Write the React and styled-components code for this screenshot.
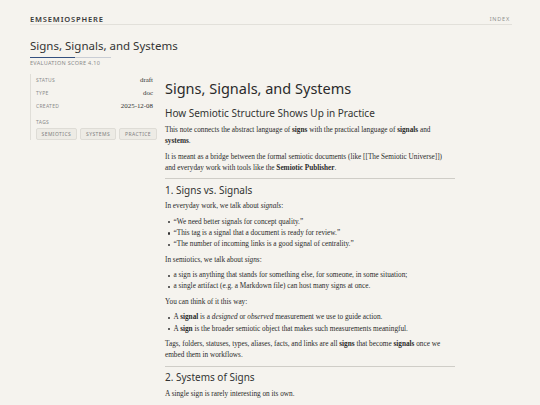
import React from "react";
import styled, { createGlobalStyle } from "styled-components";

const Global = createGlobalStyle`
  html, body { margin: 0; padding: 0; background: #f5f3ee; }
  body { font-family: "Liberation Serif", serif; color: #2b2b2b; }
  * { box-sizing: border-box; }
`;

const Page = styled.div`
  width: 540px;
  min-height: 405px;
  padding: 0 28px 0 30px;
  background: #f5f3ee;
  overflow: hidden;
`;

const TopBar = styled.header`
  display: flex;
  justify-content: space-between;
  align-items: center;
  padding-top: 14px;
  height: 25px;
  border-bottom: 1px solid #e2e0da;
`;

const Brand = styled.div`
  font-family: "Noto Sans", sans-serif;
  font-size: 7.5px;
  font-weight: 600;
  letter-spacing: 0.85px;
  color: #3a3a3a;
  line-height: 10px;
`;

const NavLink = styled.div`
  font-family: "Noto Sans", sans-serif;
  font-size: 5.5px;
  letter-spacing: 0.8px;
  color: #8f8f8f;
  margin-right: 2px;
  line-height: 10px;
`;

const DocHead = styled.div`
  padding-top: 12.5px;
`;

const DocTitle = styled.div`
  font-family: "Noto Sans", sans-serif;
  font-size: 11.5px;
  line-height: 15px;
  color: #333;
  white-space: nowrap;
`;

const ScoreBar = styled.div`
  width: 81px;
  height: 1.5px;
  margin-top: 4px;
  background: #c9cdd4;
`;

const ScoreFill = styled.div`
  height: 100%;
  background: #34507f;
`;

const ScoreLabel = styled.div`
  margin-top: 2.2px;
  font-family: "Noto Sans", sans-serif;
  font-size: 5.5px;
  line-height: 7px;
  letter-spacing: 0.3px;
  color: #8a8a8a;
`;

const Layout = styled.div`
  display: grid;
  grid-template-columns: 123px 290px;
  column-gap: 12px;
  margin-top: 7.3px;
  align-items: start;
`;

const Meta = styled.aside`
  border-left: 1px solid #e0ded8;
  padding: 2px 0 0 5px;
  display: flex;
  flex-direction: column;
  gap: 5px;
`;

const MetaRow = styled.div`
  display: flex;
  justify-content: space-between;
  align-items: center;
  height: 8px;
`;

const MetaLabel = styled.div`
  font-family: "Noto Sans", sans-serif;
  font-size: 5px;
  letter-spacing: 0.3px;
  color: #8a8a8a;
  line-height: 8px;
  margin-top: ${(p) => p.$gapTop || 0}px;
`;

const MetaValue = styled.div`
  font-family: "Liberation Serif", serif;
  font-size: 6.9px;
  color: #333;
  line-height: 8px;
`;

const Tags = styled.div`
  display: flex;
  gap: 3.8px;
  margin-top: -2.4px;
`;

const Tag = styled.span`
  display: inline-flex;
  align-items: center;
  height: 12px;
  padding: 0 4.6px;
  border: 1px solid #dedcd6;
  border-radius: 2px;
  background: #edebe5;
  font-family: "Noto Sans", sans-serif;
  font-size: 5px;
  letter-spacing: 0.4px;
  color: #808080;
`;

const Article = styled.main`
  font-size: 7.25px;
  line-height: 11.2px;
  color: #2b2b2b;
`;

const H1 = styled.h1`
  margin: 5px 0 10px;
  font-family: "Noto Sans", sans-serif;
  font-weight: 400;
  font-size: 14.5px;
  line-height: 18px;
  color: #2a2a2a;
`;

const H2 = styled.h2`
  margin: 0 0 4.35px;
  font-family: "Noto Sans", sans-serif;
  font-weight: 400;
  font-size: 10px;
  line-height: 13px;
  color: #333;
`;

const P = styled.p`
  margin: 0 0 4.35px;
  max-width: 288px;
`;

const List = styled.ul`
  list-style: none;
  margin: 0 0 4.35px;
  padding: 0;
`;

const Item = styled.li`
  position: relative;
  padding-left: 8.5px;
  &::before {
    content: "";
    position: absolute;
    left: 2.6px;
    top: 4.6px;
    width: 2.2px;
    height: 2.2px;
    border-radius: 50%;
    background: #333;
  }
`;

const Rule = styled.hr`
  border: 0;
  border-top: 1px solid #cfcdc7;
  margin: 0 0 4.35px;
  height: 0;
`;

export default function App() {
  const score = 55;
  return (
    <Page>
      <Global />
      <TopBar>
        <Brand>EMSEMIOSPHERE</Brand>
        <NavLink>INDEX</NavLink>
      </TopBar>
      <DocHead>
        <DocTitle>Signs, Signals, and Systems</DocTitle>
        <ScoreBar>
          <ScoreFill style={{ width: `${score}%` }} />
        </ScoreBar>
        <ScoreLabel>EVALUATION SCORE 4.10</ScoreLabel>
      </DocHead>
      <Layout>
        <Meta>
          <MetaRow>
            <MetaLabel>STATUS</MetaLabel>
            <MetaValue>draft</MetaValue>
          </MetaRow>
          <MetaRow>
            <MetaLabel>TYPE</MetaLabel>
            <MetaValue>doc</MetaValue>
          </MetaRow>
          <MetaRow>
            <MetaLabel>CREATED</MetaLabel>
            <MetaValue>2025-12-08</MetaValue>
          </MetaRow>
          <MetaLabel $gapTop={2.4}>TAGS</MetaLabel>
          <Tags>
            <Tag>SEMIOTICS</Tag>
            <Tag>SYSTEMS</Tag>
            <Tag>PRACTICE</Tag>
          </Tags>
        </Meta>
        <Article>
          <H1>Signs, Signals, and Systems</H1>
          <H2>How Semiotic Structure Shows Up in Practice</H2>
          <P>
            This note connects the abstract language of <b>signs</b> with the
            practical language of <b>signals</b> and <b>systems</b>.
          </P>
          <P>
            It is meant as a bridge between the formal semiotic documents (like
            [[The Semiotic Universe]]) and everyday work with tools like the{" "}
            <b>Semiotic Publisher</b>.
          </P>
          <Rule />
          <H2>1. Signs vs. Signals</H2>
          <P>
            In everyday work, we talk about <i>signals</i>:
          </P>
          <List>
            <Item>“We need better signals for concept quality.”</Item>
            <Item>“This tag is a signal that a document is ready for review.”</Item>
            <Item>“The number of incoming links is a good signal of centrality.”</Item>
          </List>
          <P>
            In semiotics, we talk about <i>signs</i>:
          </P>
          <List>
            <Item>
              a sign is anything that stands for something else, for someone, in
              some situation;
            </Item>
            <Item>a single artifact (e.g. a Markdown file) can host many signs at once.</Item>
          </List>
          <P>You can think of it this way:</P>
          <List>
            <Item>
              A <b>signal</b> is a <i>designed</i> or <i>observed</i> measurement we
              use to guide action.
            </Item>
            <Item>
              A <b>sign</b> is the broader semiotic object that makes such
              measurements meaningful.
            </Item>
          </List>
          <P>
            Tags, folders, statuses, types, aliases, facts, and links are all{" "}
            <b>signs</b> that become <b>signals</b> once we embed them in
            workflows.
          </P>
          <Rule />
          <H2>2. Systems of Signs</H2>
          <P>A single sign is rarely interesting on its own.</P>
        </Article>
      </Layout>
    </Page>
  );
}
